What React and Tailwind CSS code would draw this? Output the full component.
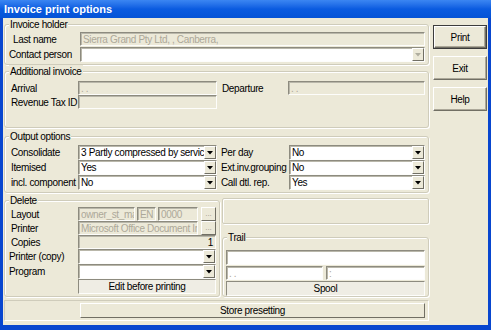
import React from "react";

const F = "font-['Liberation_Sans',Arial,sans-serif] text-[10px] tracking-[-0.35px] text-black";
const sunk = "border border-t-[#8d8b7f] border-l-[#8d8b7f] border-b-[#fdfdfb] border-r-[#fdfdfb] shadow-[inset_1px_1px_0_#b9b7aa]";
const dis = "text-[#aca899]";

function Arrow({ dim }) {
  return (
    <div className="w-[12px] shrink-0 flex items-center justify-center bg-[#ece9d8] border border-t-white border-l-white border-b-[#716f64] border-r-[#716f64]">
      <svg width="6" height="4" viewBox="0 0 6 4">
        <path d="M0 0h6L3 3.5z" fill={dim ? "#b0ae9f" : "#000"} />
      </svg>
    </div>
  );
}

function Sel({ value, className = "", dim }) {
  return (
    <div className={`${sunk} bg-white flex items-stretch ${className}`}>
      <span className="flex-1 pl-[2px] flex items-center whitespace-nowrap overflow-hidden">{value}</span>
      <Arrow dim={dim} />
    </div>
  );
}

function Field({ value = "", className = "", white, right }) {
  return (
    <div
      className={`${sunk} ${white ? "bg-white" : "bg-[#ece9d8]"} flex items-center ${right ? "justify-end pr-[2px] text-black" : "pl-[2px] " + dis} whitespace-nowrap overflow-hidden ${className}`}
    >
      {value}
    </div>
  );
}

function Group({ label, className = "", children }) {
  return (
    <div className={`relative border border-[#cfccbb] rounded-[3px] shadow-[inset_1px_1px_0_#fff,1px_1px_0_#fff] ${className}`}>
      {label && (
        <span className="absolute top-[-7px] left-[4px] px-[1px] bg-[#ece9d8] leading-[13px]">{label}</span>
      )}
      {children}
    </div>
  );
}

function Dots({ className = "" }) {
  return (
    <div className={`w-[15px] shrink-0 flex items-end justify-center pb-[2px] overflow-hidden bg-[#ece9d8] border border-t-white border-l-white border-b-[#716f64] border-r-[#716f64] text-[#9a988a] text-[8px] tracking-[0px] leading-none ${className}`}>
      ...
    </div>
  );
}

function Btn({ children, def }) {
  return (
    <div className={`h-[24px] w-[54px] ${def ? "border border-[#3c3c3c]" : ""}`}>
      <div className="w-full h-full flex items-center justify-center bg-[#ece9d8] border border-t-white border-l-white border-b-[#716f64] border-r-[#716f64] shadow-[inset_-1px_-1px_0_#aca899]">
        {children}
      </div>
    </div>
  );
}

export default function App() {
  return (
    <div className={`w-[491px] h-[330px] bg-[#0846cf] flex flex-col ${F}`}>
      <div className="h-[18px] shrink-0 bg-gradient-to-b from-[#3b86f2] via-[#0a5be0] to-[#0553d6] flex items-center pl-[4px]">
        <span className="text-white font-bold text-[11px] tracking-[0px]">Invoice print options</span>
      </div>
      <div className="flex-1 mx-[3px] mb-[5px] bg-[#ece9d8] flex pl-[1px]">
        <div className="w-[425px] flex flex-col">
          <Group label="Invoice holder" className="mt-[6px] h-[41px] pt-[7px] pr-[3px] flex flex-col gap-[1px]">
            <div className="flex h-[14px]">
              <span className="w-[75px] pl-[8px] flex items-center">Last name</span>
              <Field value="Sierra Grand Pty Ltd, , Canberra," className="flex-1" />
            </div>
            <div className="flex h-[15px]">
              <span className="w-[75px] pl-[4px] flex items-center">Contact person</span>
              <Sel value="" className="flex-1" dim />
            </div>
          </Group>

          <Group label="Additional invoice" className="mt-[6px] h-[57px] pt-[9px] pr-[3px] flex flex-col">
            <div className="flex h-[14px]">
              <span className="w-[73px] pl-[6px] flex items-center">Arrival</span>
              <Field value=". ." className="w-[139px]" />
              <span className="w-[71px] pl-[5px] flex items-center">Departure</span>
              <Field value=". ." className="flex-1" />
            </div>
            <div className="flex h-[14px]">
              <span className="w-[73px] pl-[6px] flex items-center whitespace-nowrap">Revenue Tax ID</span>
              <Field value="" className="w-[139px]" />
            </div>
          </Group>

          <Group label="Output options" className="mt-[8px] h-[57px] pt-[8px] pr-[3px] flex flex-col">
            <div className="flex h-[15px]">
              <span className="w-[73px] pl-[6px] flex items-center">Consolidate</span>
              <Sel value="3 Partly compressed by service" className="w-[139px]" />
              <span className="w-[72px] pl-[4px] flex items-center">Per day</span>
              <Sel value="No" className="flex-1" />
            </div>
            <div className="flex h-[15px]">
              <span className="w-[73px] pl-[6px] flex items-center">Itemised</span>
              <Sel value="Yes" className="w-[139px]" />
              <span className="w-[72px] pl-[4px] flex items-center whitespace-nowrap overflow-hidden">Ext.inv.grouping</span>
              <Sel value="No" className="flex-1" />
            </div>
            <div className="flex h-[15px]">
              <span className="w-[73px] pl-[6px] flex items-center whitespace-nowrap overflow-hidden">incl. component</span>
              <Sel value="No" className="w-[139px]" />
              <span className="w-[72px] pl-[4px] flex items-center">Call dtl. rep.</span>
              <Sel value="Yes" className="flex-1" />
            </div>
          </Group>

          <div className="mt-[5px] h-[99px] flex">
            <Group label="Delete" className="mt-[2px] w-[216px] h-[97px] pt-[6px] pr-[2px] flex flex-col">
              <div className="flex h-[14px]">
                <span className="w-[73px] pl-[6px] flex items-center">Layout</span>
                <Field value="owner_st_mar" className="w-[57px]" />
                <Field value="EN" className="w-[19px] ml-[2px]" />
                <Field value="0000" className="w-[40px] ml-[2px]" />
                <Dots className="ml-[3px]" />
              </div>
              <div className="flex h-[14px]">
                <span className="w-[73px] pl-[6px] flex items-center">Printer</span>
                <Field value="Microsoft Office Document Image Writer" className="w-[120px]" />
                <Dots className="ml-[3px]" />
              </div>
              <div className="flex h-[14px]">
                <span className="w-[73px] pl-[6px] flex items-center">Copies</span>
                <Field value="1" right className="w-[138px]" />
              </div>
              <div className="flex h-[15px]">
                <span className="w-[73px] pl-[4px] flex items-center">Printer (copy)</span>
                <Sel value="" className="w-[138px]" />
              </div>
              <div className="flex h-[15px]">
                <span className="w-[73px] pl-[4px] flex items-center">Program</span>
                <Sel value="" className="w-[138px]" />
              </div>
              <div className="flex h-[15px]">
                <span className="w-[73px]" />
                <div className="w-[138px] flex items-center justify-center bg-[#efede4] border border-t-[#8d8b7f] border-l-[#8d8b7f] border-b-[#fdfdfb] border-r-[#fdfdfb]">
                  Edit before printing
                </div>
              </div>
            </Group>

            <div className="ml-[2px] w-[207px] flex flex-col">
              <div className="h-[26px] border border-[#cfccbb] rounded-[2px] shadow-[inset_1px_1px_0_#fff,1px_1px_0_#fff]" />
              <Group label="Trail" className="mt-[13px] h-[60px] pt-[12px] pl-[3px] pr-[3px] flex flex-col gap-[1px]">
                <Field value="" white className="h-[15px]" />
                <div className="flex h-[14px]">
                  <Field value=". ." white className="w-[97px]" />
                  <Field value=":" white className="flex-1 ml-[3px]" />
                </div>
                <div className="h-[15px] flex items-center justify-center bg-[#efede4] border border-t-[#8d8b7f] border-l-[#8d8b7f] border-b-[#fdfdfb] border-r-[#fdfdfb]">
                  Spool
                </div>
              </Group>
            </div>
          </div>

          <div className="mt-[3px] h-[21px] border border-t-[#cfccbb] border-l-[#cfccbb] border-b-white border-r-white pl-[75px] pr-[3px] pt-[2px]">
            <div className="h-[15px] flex items-center justify-center bg-[#ece9d8] border border-t-white border-l-white border-b-[#716f64] border-r-[#716f64]">
              Store presetting
            </div>
          </div>
        </div>

        <div className="ml-[4px] pt-[7px] flex flex-col gap-[7px]">
          <Btn def>Print</Btn>
          <Btn>Exit</Btn>
          <Btn>Help</Btn>
        </div>
      </div>
    </div>
  );
}
